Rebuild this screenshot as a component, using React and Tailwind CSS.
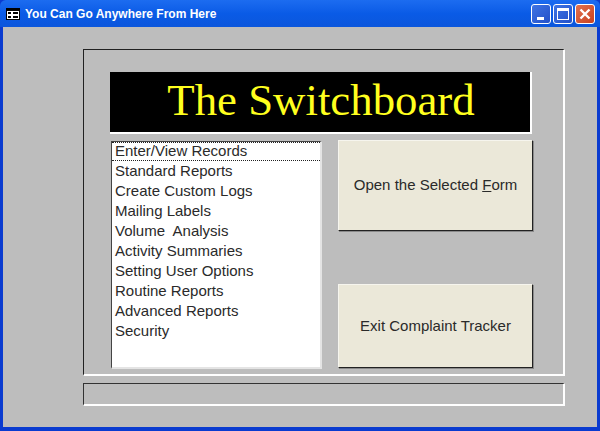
const items = [
  'Standard Reports',
  'Create Custom Logs',
  'Mailing Labels',
  'Volume  Analysis',
  'Activity Summaries',
  'Setting User Options',
  'Routine Reports',
  'Advanced Reports',
  'Security',
];

function FormIcon() {
  return (
    <svg width="14" height="12" viewBox="0 0 14 12" className="shrink-0">
      <rect x="0.5" y="0.5" width="13" height="11" fill="#fff" stroke="#000" />
      <rect x="1" y="1" width="12" height="2" fill="#000" />
      <rect x="2" y="4" width="3" height="2" fill="#000" />
      <rect x="7" y="4" width="5" height="2" fill="#000" />
      <rect x="2" y="8" width="3" height="2" fill="#000" />
      <rect x="7" y="8" width="5" height="2" fill="#000" />
    </svg>
  );
}

function Btn({ children, className }) {
  return (
    <button className={`w-[195px] flex items-center justify-center bg-[#ebe8d9] border-t border-l border-t-[#f6f5ee] border-l-[#f6f5ee] border-r border-b border-r-[#222] border-b-[#222] shadow-[1px_1px_0_#8a8a8a] text-[15px] text-[#2a2a2a] ${className}`}>
      {children}
    </button>
  );
}

export default function App() {
  return (
    <div className="w-[600px] h-[431px] flex flex-col overflow-hidden bg-[#0a3bd0] font-['Liberation_Sans',Arial,sans-serif]">
      {/* Title bar */}
      <div className="h-[27px] shrink-0 flex items-center pl-[6px] pr-[5px] rounded-t-[6px] bg-gradient-to-b from-[#1c6cf0] via-[#0a5be6] to-[#0b56dc]">
        <FormIcon />
        <span className="ml-[5px] text-[12px] font-bold text-white">You Can Go Anywhere From Here</span>
        <div className="ml-auto flex gap-[2px]">
          <div className="w-[20px] h-[20px] flex items-end pl-[5px] pb-[3px] rounded-[3px] border border-white bg-gradient-to-br from-[#3f74e4] to-[#2450c8]">
            <div className="w-[7px] h-[3px] bg-white" />
          </div>
          <div className="w-[20px] h-[20px] flex items-center justify-center rounded-[3px] border border-white bg-gradient-to-br from-[#3f74e4] to-[#2450c8]">
            <div className="w-[12px] h-[12px] border border-white border-t-[3px]" />
          </div>
          <div className="w-[20px] h-[20px] flex items-center justify-center rounded-[3px] border border-white bg-gradient-to-br from-[#e2714e] to-[#c8401e]">
            <svg width="12" height="12" viewBox="0 0 12 12">
              <path d="M1.5 1.5 L10.5 10.5 M10.5 1.5 L1.5 10.5" stroke="#fff" strokeWidth="2.4" />
            </svg>
          </div>
        </div>
      </div>

      {/* Window body */}
      <div className="h-[400px] mx-[3px] bg-[#bdbdbd] pt-[22px] pl-[80px] pr-[32px]">
        <div className="h-[327px] border-t border-l border-t-[#222] border-l-[#222] border-r-2 border-b-2 border-r-white border-b-white pt-[22px] pl-[26px] pr-[32px]">
          <div className="h-[62px] w-[422px] flex items-center justify-center pb-[2px] pl-[2px] bg-black border-r-2 border-b-2 border-white font-['Liberation_Serif',serif] text-[44.8px] text-[#ffff1e]">
            The Switchboard
          </div>
          <div className="flex mt-[6px]">
            <div className="w-[211px] h-[228px] shrink-0 mt-[1px] ml-[1px] bg-white border-t border-l border-t-[#444] border-l-[#444] border-r-2 border-b-2 border-r-[#e4e4e4] border-b-[#e4e4e4] text-[15px] leading-[20px] text-[#2a2a2a]">
              <div className="h-[19px] pl-[3px] border-t border-b border-dotted border-[#222] leading-[16px]">Enter/View Records</div>
              {items.map((item) => (
                <div key={item} className="pl-[3px] whitespace-pre">{item}</div>
              ))}
            </div>
            <div className="ml-[16px] shrink-0 flex flex-col justify-between h-[228px]">
              <Btn className="h-[91px]">
                <span>Open the Selected <span className="underline">F</span>orm</span>
              </Btn>
              <Btn className="h-[84px]">Exit Complaint Tracker</Btn>
            </div>
          </div>
        </div>
        <div className="h-[23px] mt-[7px] border-t border-l border-t-[#333] border-l-[#333] border-r-2 border-b-2 border-r-white border-b-white" />
      </div>
    </div>
  );
}
